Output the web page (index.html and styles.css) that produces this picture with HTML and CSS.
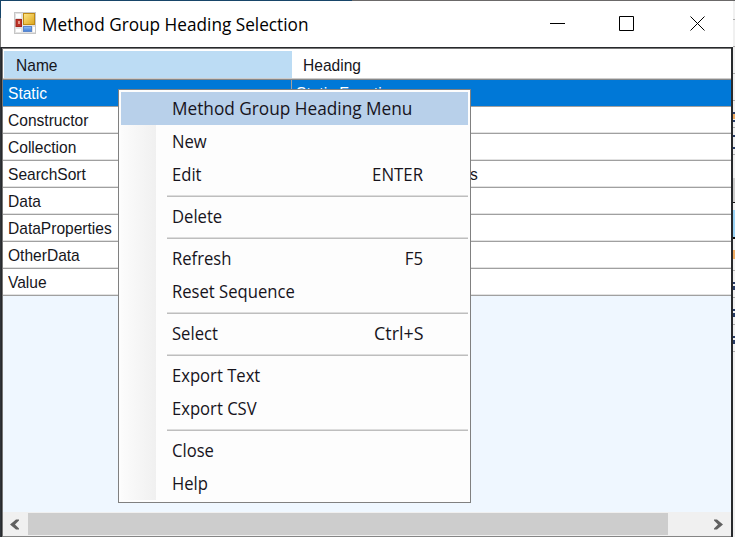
FILE: index.html
```html
<!DOCTYPE html>
<html lang="en">
<head>
<meta charset="utf-8">
<title>Method Group Heading Selection</title>
<link rel="stylesheet" href="styles.css">
</head>
<body>
<div class="desktop">
  <main class="window">
    <header class="titlebar">
      <svg class="app-icon" width="22" height="22" viewBox="0 0 22 22">
        <defs>
          <linearGradient id="gold" x1="0" y1="0" x2="1" y2="1"><stop offset="0" stop-color="#ffe789"/><stop offset="1" stop-color="#dca51a"/></linearGradient>
          <linearGradient id="blue" x1="0" y1="0" x2="0" y2="1"><stop offset="0" stop-color="#8dbdfa"/><stop offset="1" stop-color="#437bd2"/></linearGradient>
        </defs>
        <rect x=".5" y=".5" width="21" height="21" fill="#e3e3e3" stroke="#c6c6c6"/>
        <path d="M2 2h5v4H2zM2 17h5v3H2zM19 15h2v5h-2z" fill="#fff"/>
        <rect x="9.500" y="1.500" width="11" height="11" fill="url(#gold)" stroke="#c08a13"/>
        <rect x="2" y="7.500" width="5.500" height="7" fill="#bd3429" stroke="#a3241c"/>
        <rect x="4" y="9" width="2" height="3" fill="#e59a8d"/>
        <rect x="9.500" y="14.500" width="8" height="5" fill="url(#blue)" stroke="#5b86cb"/>
      </svg>
      <h1>Method Group Heading Selection</h1>
      <svg class="controls" width="160" height="16" viewBox="0 0 160 16" fill="none" stroke="#000">
        <path d="M0 7.500h15M69.500.500h14v14h-14zM140.500.500l14 14M154.500.500l-14 14"/>
      </svg>
    </header>
    <section class="grid">
      <div class="row head"><span class="name"><b>Name</b></span><span class="heading"><b>Heading</b></span></div>
      <div class="row selected"><span class="name"><b>Static</b></span><span class="heading"><b>Static Functions</b></span></div>
      <div class="row"><span class="name"><b>Constructor</b></span><span class="heading"></span></div>
      <div class="row"><span class="name"><b>Collection</b></span><span class="heading"></span></div>
      <div class="row"><span class="name"><b>SearchSort</b></span><span class="heading tail"><b>s</b></span></div>
      <div class="row"><span class="name"><b>Data</b></span><span class="heading"></span></div>
      <div class="row"><span class="name"><b>DataProperties</b></span><span class="heading"></span></div>
      <div class="row"><span class="name"><b>OtherData</b></span><span class="heading"></span></div>
      <div class="row"><span class="name"><b>Value</b></span><span class="heading"></span></div>
      <div class="blank"></div>
      <div class="scrollbar">
        <svg width="25" height="23" viewBox="0 0 25 23"><path d="M16 6.500h-3L7 11.500l6 5h3v-1L12 11.500l4-4z" fill="#606060"/></svg>
        <div class="track"><div class="thumb"></div></div>
        <svg width="25" height="23" viewBox="0 0 25 23"><path d="M8 6.500h3l6 5-6 5H8v-1l4-4-4-4z" fill="#606060"/></svg>
      </div>
    </section>
  </main>
  <div class="behind">
    <svg width="2" height="537" viewBox="0 0 2 537">
      <path fill="#f0f0f0" d="M0 0h2v537H0z"/>
      <path fill="#666" d="M0 0h2v1H0z"/>
      <path fill="#aaa" d="M0 19h2v1H0zM0 46h2v1H0zM0 73h2v1H0zM0 100h2v1H0zM0 127h2v1H0zM0 154h2v1H0zM0 270h2v1H0zM0 297h2v1H0zM0 324h2v1H0zM0 351h2v1H0z"/>
      <path fill="#ccc" d="M0 178h2v24H0z"/>
      <path fill="#111" d="M0 202h2v1H0zM0 237h2v2H0z"/>
      <path fill="#9bd3f5" d="M0 210h2v27H0z"/>
      <path fill="#293d66" d="M0 112h2v2H0zM0 120h2v2H0zM0 135h2v2H0zM0 147h2v2H0zM0 282h2v2H0zM0 286h2v4H0zM0 309h2v2H0zM0 313h2v4H0zM0 336h2v2H0zM0 340h2v4H0z"/>
      <path fill="#efac64" d="M0 114h2v5H0zM0 250h2v9H0z"/>
    </svg>
  </div>
  <nav class="menu">
    <div class="item title"><b>Method Group Heading Menu</b></div>
    <div class="item"><b>New</b></div>
    <div class="item"><b>Edit</b><kbd>ENTER</kbd></div>
    <hr>
    <div class="item"><b>Delete</b></div>
    <hr>
    <div class="item"><b>Refresh</b><kbd>F5</kbd></div>
    <div class="item"><b>Reset Sequence</b></div>
    <hr>
    <div class="item"><b>Select</b><kbd class="wide">Ctrl+S</kbd></div>
    <hr>
    <div class="item"><b>Export Text</b></div>
    <div class="item"><b>Export CSV</b></div>
    <hr>
    <div class="item"><b>Close</b></div>
    <div class="item"><b>Help</b></div>
  </nav>
</div>
</body>
</html>
```
FILE: styles.css
```css
* { box-sizing: border-box; }
body { margin: 0; overflow: hidden; }
b, kbd, h1 { font-weight: 400; white-space: nowrap; }
.desktop {
  position: relative;
  display: flex;
  width: 735px;
  height: 537px;
  padding: 1px 0 0 1px;
  background:
    linear-gradient(#174569 18px, #777 18px, #777 47px, #303439 47px) 0 0 / 1px 100% no-repeat,
    linear-gradient(90deg, #174569 352px, #6b6969 352px);
}
.window { width: 732px; height: 536px; display: flex; flex-direction: column; background: #fff; }
.titlebar { height: 46px; flex: none; display: flex; align-items: center; padding-left: 13px; }
.app-icon { flex: none; margin-top: -2px; }
h1 {
  margin: -1px 0 0 6px;
  width: 508px;
  font: 400 18.500px/26px "Open Sans", sans-serif;
  color: #000;
  transform: scaleX(.93);
  transform-origin: left;
}
.controls { flex: none; margin-top: -1px; }
.grid {
  flex: 1;
  display: flex;
  flex-direction: column;
  border: solid #27292c;
  border-width: 1px 2px 0 1px;
  box-shadow: inset 1px 1px #777;
  padding: 2px 0 0 1px;
}
.row {
  display: flex;
  height: 27px;
  flex: none;
  background: #fff;
  border-bottom: 1px solid #a0a0a0;
  box-shadow: inset 0 -1px #e2e2e2;
  font: 17px/27px "Liberation Sans", Arial, sans-serif;
  color: #16161c;
}
.row b { display: inline-block; transform: scaleX(.915); transform-origin: left; }
.name { width: 289px; flex: none; padding-left: 5px; border-right: 1px solid #a0a0a0; }
.heading { flex: 1; padding-left: 4px; }
.head { height: 30px; line-height: 31px; border-bottom-color: #888; box-shadow: inset 0 -1px #ccc; }
.head .name { padding-left: 12px; background: #bcdcf4; border-right-color: #fff; margin: 1px 0 1px 1px; width: 289px; line-height: 29px; }
.head .heading { padding-left: 10px; }
.selected { background: #0078d7; color: #fff; box-shadow: none; }
.tail { padding-left: 178px; }
.blank { flex: 1; background: #eff7ff; }
.scrollbar { height: 25px; flex: none; display: flex; align-items: center; background: #f0f0f0; border-bottom: 1px solid #858585; }
.track { flex: 1; }
.thumb { width: 640px; height: 22px; background: #cdcdcd; }
.behind { width: 2px; margin-top: -1px; }
.behind svg { display: block; }
.menu {
  position: absolute;
  left: 118px;
  top: 89px;
  width: 353px;
  height: 414px;
  padding: 2px 1px 1px 2px;
  border: 1px solid #808080;
  background: linear-gradient(90deg, #fcfcfc, #f0f0f0) 2px 2px / 35px 408px no-repeat, #fdfdfd;
}
.item {
  height: 33px;
  display: flex;
  justify-content: space-between;
  padding: 0 46px 0 51px;
  font: 17.500px/32px "Open Sans", sans-serif;
  color: #17141c;
}
.item b { transform: scaleX(.95); transform-origin: left; }
.item kbd { font: inherit; transform: scaleX(.96); transform-origin: right; }
.item kbd.wide { transform: scaleX(1.02); }
.item.title { background: #b8d0ea; margin-right: 1px; }
.item.title b { transform: scaleX(.985); }
.menu hr { height: 9px; margin: 0 1px 0 46px; border: 0; background: linear-gradient(#ddd, #ddd) 0 4px / 100% 1px no-repeat, linear-gradient(#bebebe, #bebebe) 0 5px / 100% 1px no-repeat; }
```
